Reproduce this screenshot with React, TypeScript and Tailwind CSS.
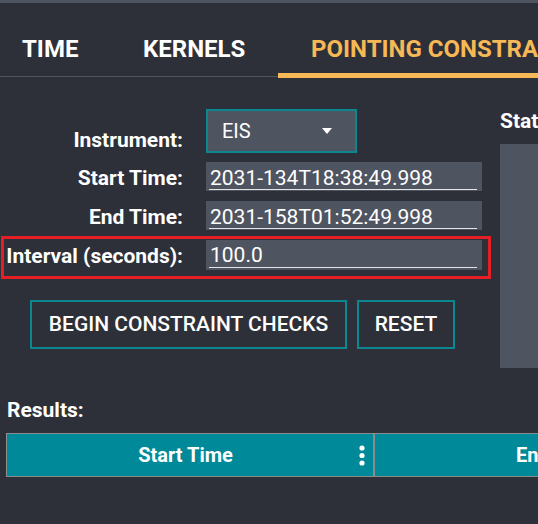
import React from "react";

const TEAL = "border-[#0b8792]";

function Label({ text, className }: { text: string; className?: string }) {
  return (
    <div
      className={
        "w-[179px] shrink-0 text-right text-[21px] font-bold leading-[25px] whitespace-nowrap " +
        (className ?? "")
      }
    >
      {text}
    </div>
  );
}

function TextInput({
  value,
  h,
  textCls,
}: {
  value: string;
  h: string;
  textCls: string;
}) {
  return (
    <div className={"ml-[23px] w-[276px] shrink-0 bg-[#4f5461] pl-[3px] pr-[5px] " + h}>
      <div
        className={
          "h-[28px] border-b border-[#e4e4e4] pl-[1px] text-[21px] text-white whitespace-nowrap " +
          textCls
        }
      >
        {value}
      </div>
    </div>
  );
}

export default function App() {
  return (
    <div className="w-[538px] h-[524px] overflow-hidden bg-[#2e3039] text-white font-['Roboto','Noto_Sans',sans-serif] flex flex-col">
      {/* top band */}
      <div className="h-[3px] shrink-0 bg-[#4f5461]" />

      {/* tabs */}
      <div className="flex h-[75px] shrink-0">
        <div className="flex w-[100px] shrink-0 flex-col">
          <div className="flex-1 pl-[22px] pt-[32px] text-[24px] font-bold leading-[28px]">
            TIME
          </div>
          <div className="h-px bg-[#4f5461]" />
          <div className="h-px" />
        </div>
        <div className="flex w-[178px] shrink-0 flex-col">
          <div className="flex-1 pl-[43px] pt-[32px] text-[24px] font-bold leading-[28px]">
            KERNELS
          </div>
          <div className="h-px bg-[#4f5461]" />
          <div className="h-px" />
        </div>
        <div className="flex w-[420px] shrink-0 flex-col">
          <div className="flex-1 pl-[33px] pt-[32px] text-[24px] font-bold leading-[28px] text-[#f6b955] whitespace-nowrap">
            POINTING CONSTRAINTS
          </div>
          <div className="h-[5px] bg-[#f6b955]" />
        </div>
      </div>

      {/* main */}
      <div className="flex shrink-0">
        <div className="flex w-[491px] shrink-0 flex-col pl-[1px]">
          {/* Instrument */}
          <div className="mt-[31px] flex items-start border-x-[3px] border-transparent">
            <Label text="Instrument:" className="mt-[19px]" />
            <div
              className={
                "ml-[23px] flex h-[44px] w-[151px] shrink-0 items-center justify-between border-2 bg-[#4f5461] pl-[14px] pr-[23px] " +
                TEAL
              }
            >
              <span className="text-[20px] leading-[24px]">EIS</span>
              <svg width="10" height="6" viewBox="0 0 10 6">
                <path d="M0 0 H10 L5 6 Z" fill="#ffffff" />
              </svg>
            </div>
          </div>

          {/* Start time */}
          <div className="mt-[9px] flex items-start border-x-[3px] border-transparent">
            <Label text="Start Time:" className="mt-[4px]" />
            <TextInput
              value="2031-134T18:38:49.998"
              h="h-[29px]"
              textCls="pt-[5px] leading-[23px]"
            />
          </div>

          {/* End time */}
          <div className="mt-[10px] flex items-start border-x-[3px] border-transparent">
            <Label text="End Time:" className="mt-[4px]" />
            <TextInput
              value="2031-158T01:52:49.998"
              h="h-[29px]"
              textCls="pt-[5px] leading-[23px]"
            />
          </div>

          {/* Interval (highlighted) */}
          <div className="mt-[6px] flex items-start border-[3px] border-[#e31e24] pt-[1px] pb-[6px]">
            <Label text="Interval (seconds):" className="mt-[4px]" />
            <TextInput value="100.0" h="h-[30px]" textCls="pt-[4px] leading-[23px]" />
          </div>

          {/* buttons */}
          <div className="mt-[21px] ml-[29px] flex gap-[10px]">
            <div
              className={
                "flex h-[49px] w-[317px] items-center justify-center border-2 text-[21px] font-medium whitespace-nowrap " +
                TEAL
              }
            >
              BEGIN CONSTRAINT CHECKS
            </div>
            <div
              className={
                "flex h-[49px] w-[98px] items-center justify-center border-2 text-[21px] font-medium " +
                TEAL
              }
            >
              RESET
            </div>
          </div>
        </div>

        <div className="ml-[9px] flex w-[200px] shrink-0 flex-col">
          <div className="mt-[31px] text-[21px] font-bold leading-[25px] whitespace-nowrap">
            Status:
          </div>
          <div className="mt-[10px] h-[224px] bg-[#4f5461]" />
        </div>
      </div>

      {/* results */}
      <div className="mt-[30px] pl-[7px] text-[21px] font-bold leading-[24px]">Results:</div>
      <div className="mt-[11px] ml-[6px] flex h-[44px] w-[800px] shrink-0 border border-[#8c8c8c] bg-[#008a99]">
        <div className="flex w-[366px] shrink-0 items-center">
          <div className="flex-1 pl-[5px] text-center text-[20px] font-bold leading-[24px]">
            Start Time
          </div>
          <svg width="6" height="21" viewBox="0 0 6 21" className="mr-[8px]">
            <circle cx="3" cy="3" r="2.6" fill="#ffffff" />
            <circle cx="3" cy="10.5" r="2.6" fill="#ffffff" />
            <circle cx="3" cy="18" r="2.6" fill="#ffffff" />
          </svg>
        </div>
        <div className="flex w-[368px] shrink-0 items-center justify-center border-l-2 border-[#8c8c8c] text-[20px] font-bold leading-[24px]">
          End Time
        </div>
      </div>
    </div>
  );
}
